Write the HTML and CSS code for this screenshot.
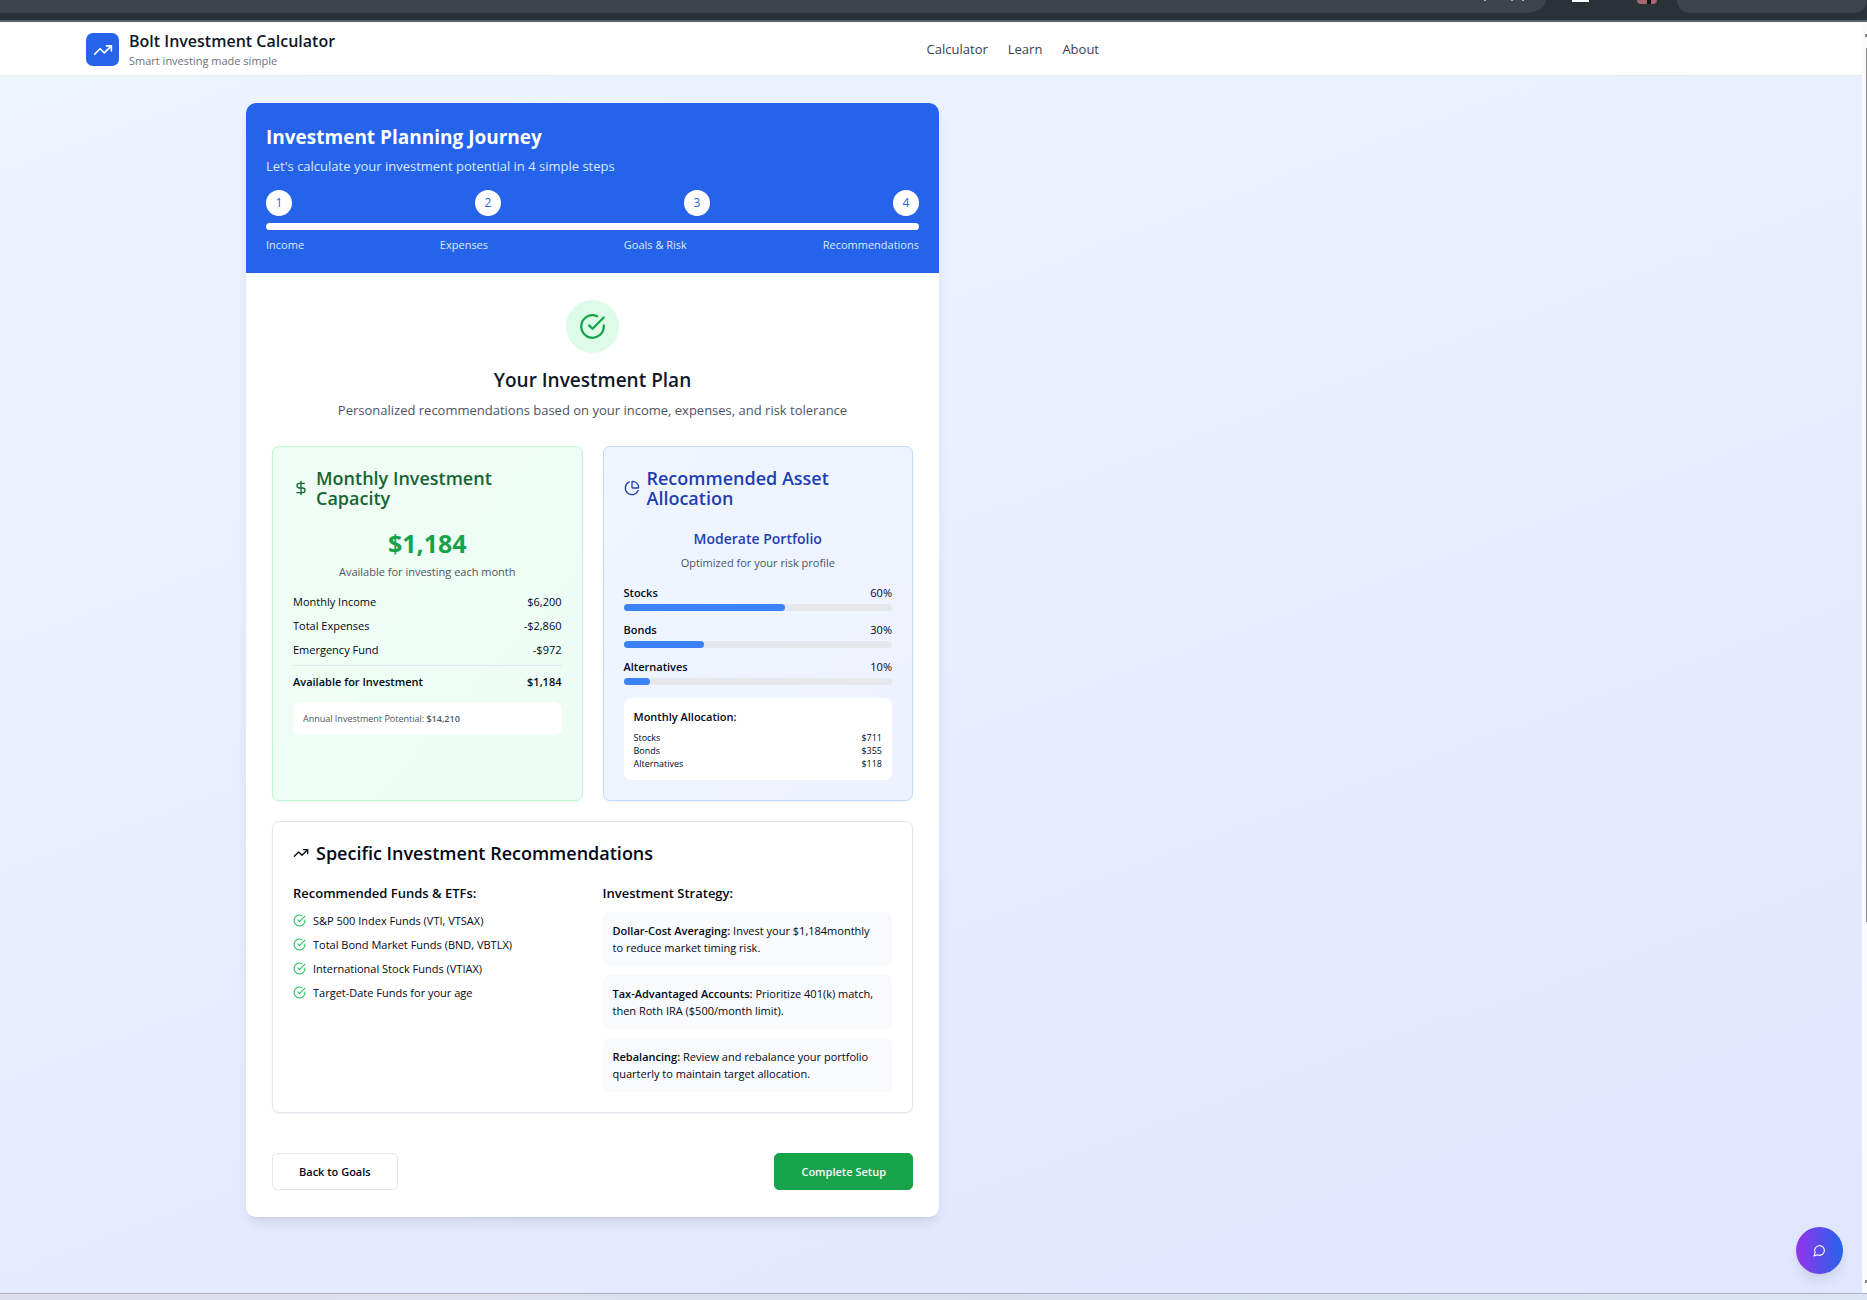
FILE: index.html
```html
<!DOCTYPE html>
<html lang="en">
  <head>
    <meta charset="UTF-8" />
    <meta name="viewport" content="width=device-width, initial-scale=1.0" />
    <title>Bolt Investment Calculator</title>
    <link rel="stylesheet" href="styles.css">
  </head>
  <body>
    <!-- shared icons -->
    <svg class="sprite" aria-hidden="true">
      <symbol id="trend" viewBox="0 0 24 24">
        <path d="M22 7 13.5 15.5 8.5 10.5 2 17" />
        <path d="M16 7h6v6" />
      </symbol>
      <symbol id="check" viewBox="0 0 24 24">
        <path d="M22 11.08V12a10 10 0 1 1-5.93-9.14" />
        <path d="m9 11 3 3L22 4" />
      </symbol>
    </svg>

    <div class="browser-bar">
      <div class="tool address">
        <i class="dot"></i><i class="dot"></i><i class="dot"></i>
      </div>
      <i class="extension"></i>
      <i class="avatar"></i>
      <div class="tool search"></div>
    </div>

    <div class="window">
      <div class="page">
        <header class="site-header">
          <div class="column">
            <div class="header-inner">
              <div class="brand">
                <div class="logo">
                  <svg class="icon"><use href="#trend" /></svg>
                </div>
                <div>
                  <h1>Bolt Investment Calculator</h1>
                  <p>Smart investing made simple</p>
                </div>
              </div>
              <nav>
                <a href="#calculator">Calculator</a>
                <a href="#learn">Learn</a>
                <a href="#about">About</a>
              </nav>
            </div>
          </div>
        </header>

        <main class="column">
          <div class="planner">
            <section class="journey">
              <h2>Investment Planning Journey</h2>
              <p>Let's calculate your investment potential in 4 simple steps</p>
              <div class="steps">
                <span>1</span>
                <span>2</span>
                <span>3</span>
                <span>4</span>
              </div>
              <div class="journey-bar"></div>
              <div class="step-labels">
                <span>Income</span>
                <span>Expenses</span>
                <span>Goals &amp; Risk</span>
                <span>Recommendations</span>
              </div>
            </section>

            <div class="content">
              <div class="intro">
                <div class="badge">
                  <svg class="icon"><use href="#check" /></svg>
                </div>
                <h2>Your Investment Plan</h2>
                <p>Personalized recommendations based on your income, expenses, and risk tolerance</p>
              </div>

              <div class="cards">
                <section class="card capacity">
                  <h3>
                    <svg class="icon" viewBox="0 0 24 24">
                      <path d="M12 2v20" />
                      <path d="M17 5H9.5a3.5 3.5 0 0 0 0 7h5a3.5 3.5 0 0 1 0 7H6" />
                    </svg>
                    Monthly Investment Capacity
                  </h3>
                  <div class="amount">$1,184</div>
                  <p class="caption">Available for investing each month</p>
                  <dl class="rows">
                    <div><dt>Monthly Income</dt><dd>$6,200</dd></div>
                    <div><dt>Total Expenses</dt><dd>-$2,860</dd></div>
                    <div><dt>Emergency Fund</dt><dd>-$972</dd></div>
                    <div class="total"><dt>Available for Investment</dt><dd>$1,184</dd></div>
                  </dl>
                  <p class="note">Annual Investment Potential: <strong>$14,210</strong></p>
                </section>

                <section class="card allocation">
                  <h3>
                    <svg class="icon" viewBox="0 0 24 24">
                      <path d="M21 12c.55 0 1-.45.95-1a10 10 0 0 0-8.95-8.95c-.55-.05-1 .4-1 .95v8a1 1 0 0 0 1 1z" />
                      <path d="M21.21 15.89A10 10 0 1 1 8 2.83" />
                    </svg>
                    Recommended Asset Allocation
                  </h3>
                  <div class="portfolio">Moderate Portfolio</div>
                  <p class="caption">Optimized for your risk profile</p>
                  <div class="bars">
                    <div>
                      <div class="bar-label"><strong>Stocks</strong><span>60%</span></div>
                      <div class="track"><div class="fill" style="width: 60%"></div></div>
                    </div>
                    <div>
                      <div class="bar-label"><strong>Bonds</strong><span>30%</span></div>
                      <div class="track"><div class="fill" style="width: 30%"></div></div>
                    </div>
                    <div>
                      <div class="bar-label"><strong>Alternatives</strong><span>10%</span></div>
                      <div class="track"><div class="fill" style="width: 10%"></div></div>
                    </div>
                  </div>
                  <div class="monthly">
                    <h4>Monthly Allocation:</h4>
                    <dl>
                      <div><dt>Stocks</dt><dd>$711</dd></div>
                      <div><dt>Bonds</dt><dd>$355</dd></div>
                      <div><dt>Alternatives</dt><dd>$118</dd></div>
                    </dl>
                  </div>
                </section>
              </div>

              <section class="card specific">
                <h3>
                  <svg class="icon"><use href="#trend" /></svg>
                  Specific Investment Recommendations
                </h3>
                <div class="specific-grid">
                  <div>
                    <h4>Recommended Funds &amp; ETFs:</h4>
                    <ul class="funds">
                      <li><svg class="icon"><use href="#check" /></svg>S&amp;P 500 Index Funds (VTI, VTSAX)</li>
                      <li><svg class="icon"><use href="#check" /></svg>Total Bond Market Funds (BND, VBTLX)</li>
                      <li><svg class="icon"><use href="#check" /></svg>International Stock Funds (VTIAX)</li>
                      <li><svg class="icon"><use href="#check" /></svg>Target-Date Funds for your age</li>
                    </ul>
                  </div>
                  <div>
                    <h4>Investment Strategy:</h4>
                    <div class="strategies">
                      <p><strong>Dollar-Cost Averaging:</strong> Invest your $1,184monthly<br />to reduce market timing risk.</p>
                      <p><strong>Tax-Advantaged Accounts:</strong> Prioritize 401(k) match,<br />then Roth IRA ($500/month limit).</p>
                      <p><strong>Rebalancing:</strong> Review and rebalance your portfolio<br />quarterly to maintain target allocation.</p>
                    </div>
                  </div>
                </div>
              </section>

              <div class="actions">
                <button type="button" class="back">Back to Goals</button>
                <button type="button" class="complete">Complete Setup</button>
              </div>
            </div>
          </div>
        </main>

        <button type="button" class="chat" aria-label="Open chat">
          <svg class="icon" viewBox="0 0 24 24">
            <path d="M7.9 20A9 9 0 1 0 4 16.1L2 22Z" />
          </svg>
        </button>
      </div>
      <div class="scrollbar">
        <i class="arrow"></i>
        <i class="thumb"></i>
        <i class="arrow"></i>
      </div>
    </div>
    <div class="taskbar"></div>
  </body>
</html>
```
FILE: styles.css
```css
* {
  box-sizing: border-box;
  margin: 0;
  padding: 0;
}
body {
  display: flex;
  flex-direction: column;
  min-height: 100vh;
  font-family: "Open Sans", "Noto Sans", sans-serif;
  font-size: 11px;
  line-height: 17px;
  color: #020817;
}
a {
  color: inherit;
  text-decoration: none;
}
ul {
  list-style: none;
}
strong {
  font-weight: 600;
}
.sprite {
  display: none;
}
.icon {
  width: 16px;
  height: 16px;
  flex: none;
  fill: none;
  stroke: currentColor;
  stroke-width: 2;
  stroke-linecap: round;
  stroke-linejoin: round;
}

/* browser chrome */
.browser-bar {
  display: flex;
  height: 22px;
  background: #283237;
  border-bottom: 2px solid #59646a;
}
.tool {
  height: 13px;
  background: #3a444a;
}
.address {
  flex: 1;
  display: flex;
  justify-content: flex-end;
  gap: 9px;
  padding-right: 22px;
  border-bottom-right-radius: 20px 13px;
}
.dot {
  width: 2px;
  height: 1px;
  background: #aab2b6;
}
.dot:first-child {
  margin-right: 16px;
}
.extension {
  width: 17px;
  height: 2px;
  margin-left: 26px;
  background: #fff;
}
.avatar {
  width: 20px;
  height: 4px;
  margin: 0 20px 0 48px;
  border-radius: 0 0 10px 10px;
  background: linear-gradient(90deg, #a8646c 50%, #1a1018 50%, #1a1018 70%, #a8646c 70%);
}
.search {
  width: 190px;
  border-radius: 0 0 20px 20px;
}
.window {
  flex: 1;
  display: flex;
}
.scrollbar {
  display: flex;
  flex-direction: column;
  align-items: flex-end;
  width: 5px;
  padding: 12px 0 10px;
  background: #fbfbfb;
}
.arrow {
  width: 2px;
  height: 3px;
  background: #888;
}
.thumb {
  width: 1px;
  height: 70%;
  margin: 11px 0 auto;
  background: #888;
}
.taskbar {
  height: 7px;
  border-top: 1px solid #adb1c6;
  background: linear-gradient(90deg, #dcdded, #dfe0ee 20%, #d8e0ed 60%, #dbe4f2);
}

/* site */
.page {
  flex: 1;
  position: relative;
  background: linear-gradient(160deg, #edf5ff, #e0e6ff);
}
.column {
  width: 100%;
  max-width: 1185px;
}
.site-header {
  background: #fff;
  border-bottom: 1px solid #e5e7eb;
}
.header-inner {
  display: flex;
  align-items: center;
  justify-content: space-between;
  max-width: 1067px;
  margin: 0 auto;
  padding: 8px 27px 6px;
}
.brand {
  display: flex;
  align-items: center;
  gap: 10px;
}
.logo {
  display: grid;
  place-items: center;
  width: 33px;
  height: 33px;
  border-radius: 7px;
  background: #2563eb;
  color: #fff;
}
.logo .icon {
  width: 20px;
  height: 20px;
}
.brand h1 {
  font-size: 16px;
  font-weight: 600;
  line-height: 22px;
  color: #111827;
}
.brand p {
  color: #6b7280;
}
nav {
  display: flex;
  gap: 20px;
  font-size: 13px;
  color: #374151;
}
.planner {
  max-width: 693px;
  margin: 27px auto;
  border-radius: 10px;
  background: #fff;
  overflow: hidden;
  box-shadow: 0 8px 13px -3px rgba(0, 0, 0, 0.1), 0 3px 5px -4px rgba(0, 0, 0, 0.1);
}
.journey {
  padding: 20px;
  background: #2563eb;
  color: #fff;
}
.journey h2,
.intro h2 {
  font-size: 19px;
  line-height: 28px;
}
.journey p {
  margin: 5px 0 14px;
  font-size: 13px;
  line-height: 20px;
  color: #dbeafe;
}
.steps,
.step-labels {
  display: flex;
  justify-content: space-between;
}
.steps span {
  width: 26px;
  height: 26px;
  border-radius: 50%;
  background: #fff;
  color: #2563eb;
  font-size: 12px;
  line-height: 26px;
  text-align: center;
}
.journey-bar {
  height: 7px;
  margin: 7px 0;
  border-radius: 4px;
  background: #fff;
}
.step-labels {
  line-height: 16px;
  color: #dbeafe;
}
.content {
  padding: 27px 26px;
}
.intro {
  text-align: center;
}
.badge {
  display: grid;
  place-items: center;
  width: 53px;
  height: 53px;
  margin: 0 auto 13px;
  border-radius: 50%;
  background: #dcfce7;
  color: #16a34a;
}
.badge .icon {
  width: 27px;
  height: 27px;
}
.intro h2 {
  font-weight: 600;
  color: #111827;
}
.intro p {
  margin: 6px 0 26px;
  font-size: 13px;
  line-height: 20px;
  color: #4b5563;
}
.cards {
  display: grid;
  grid-template-columns: 1fr 1fr;
  gap: 20px;
}
.card {
  padding: 21px 20px 20px;
  border: 1px solid #e2e8f0;
  border-radius: 7px;
  box-shadow: 0 1px 2px rgba(0, 0, 0, 0.05);
}
.card h3 {
  display: flex;
  align-items: center;
  gap: 7px;
  margin-bottom: 19px;
  font-size: 18px;
  font-weight: 600;
  line-height: 20px;
}
.capacity {
  border-color: #bbf7d0;
  background: linear-gradient(to bottom right, #f0fdf4, #ecfdf5);
}
.capacity h3 {
  color: #166534;
}
.allocation {
  border-color: #bfdbfe;
  background: linear-gradient(to bottom right, #eff6ff, #eef2ff);
}
.allocation h3,
.portfolio {
  color: #1e40af;
}
.amount {
  font-size: 25px;
  font-weight: 700;
  line-height: 32px;
  text-align: center;
  color: #16a34a;
}
.portfolio {
  font-size: 14px;
  font-weight: 600;
  line-height: 23px;
  text-align: center;
}
.caption {
  margin: 5px 0 13px;
  line-height: 16px;
  text-align: center;
  color: #4b5563;
}
.rows {
  display: grid;
  gap: 7px;
}
.rows div,
.monthly dl div,
.bar-label {
  display: flex;
  justify-content: space-between;
}
.rows .total {
  padding-top: 7px;
  border-top: 1px solid #e2e8f0;
  font-weight: 600;
}
.note,
.monthly {
  padding: 10px;
  border-radius: 7px;
  background: #fff;
}
.note {
  margin-top: 12px;
  font-size: 9px;
  line-height: 13px;
  color: #4b5563;
}
.bars {
  display: grid;
  gap: 10px;
}
.track {
  height: 7px;
  margin-top: 3px;
  border-radius: 4px;
  background: #e5e7eb;
}
.fill {
  height: 100%;
  border-radius: 4px;
  background: #3b82f6;
}
.monthly {
  margin-top: 13px;
}
.monthly h4 {
  margin-bottom: 6px;
  font-weight: 600;
}
.monthly dl {
  font-size: 9px;
  line-height: 13px;
}
.specific {
  margin-top: 20px;
}
.specific h3 {
  margin-bottom: 20px;
}
.specific-grid {
  display: grid;
  grid-template-columns: 1fr 1fr;
  gap: 20px;
}
.specific h4 {
  margin-bottom: 9px;
  font-size: 13px;
  font-weight: 600;
  line-height: 20px;
}
.funds,
.strategies {
  display: grid;
  gap: 7px;
}
.funds li {
  display: flex;
  align-items: center;
  gap: 7px;
}
.funds .icon {
  width: 13px;
  height: 13px;
  color: #22c55e;
}
.strategies {
  gap: 9px;
}
.strategies p {
  padding: 10px;
  border-radius: 7px;
  background: #f9fafb;
}
.actions {
  display: flex;
  justify-content: space-between;
  margin-top: 40px;
}
.actions button {
  height: 37px;
  padding: 0 26px;
  border: 1px solid #e2e8f0;
  border-radius: 5px;
  background: #fff;
  color: #020817;
  font: 600 11px "Open Sans", "Noto Sans", sans-serif;
  cursor: pointer;
}
.actions .complete {
  border-color: #16a34a;
  background: #16a34a;
  color: #f8fafc;
}
.chat {
  position: absolute;
  right: 19px;
  bottom: 19px;
  display: grid;
  place-items: center;
  width: 47px;
  height: 47px;
  border: none;
  border-radius: 50%;
  background: linear-gradient(to right, #9333ea, #2563eb);
  color: #fff;
  box-shadow: 0 8px 13px -3px rgba(0, 0, 0, 0.1), 0 3px 5px -4px rgba(0, 0, 0, 0.1);
  cursor: pointer;
}
.chat .icon {
  width: 13px;
  height: 13px;
}
```
